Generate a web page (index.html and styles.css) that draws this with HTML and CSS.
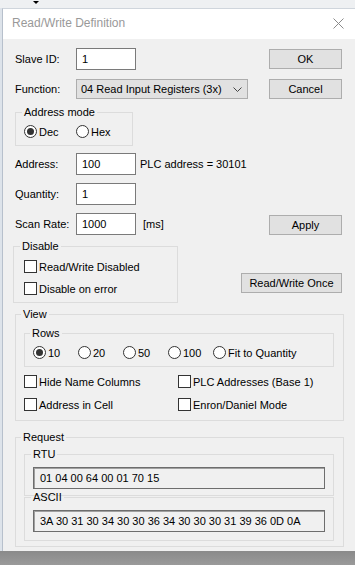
FILE: index.html
```html
<!DOCTYPE html>
<html>
<head>
<meta charset="utf-8">
<link rel="stylesheet" href="styles.css">
</head>
<body>
<div class="screen">
  <div class="strip"><span class="caret"></span></div>
  <div class="frame">
    <div class="window">
      <div class="titlebar">
        <span class="title">Read/Write Definition</span>
        <svg class="close" width="11" height="11" viewBox="0 0 11 11"><path d="M0.5 0.5 L10.5 10.5 M10.5 0.5 L0.5 10.5" stroke="#8a8a8a" stroke-width="1" fill="none"/></svg>
      </div>
      <div class="content">
        <div class="row r-slave">
          <span class="lbl">Slave ID:</span>
          <div class="field">1</div>
          <div class="btn btn-ok">OK</div>
        </div>
        <div class="row r-func">
          <span class="lbl">Function:</span>
          <div class="select">
            <span>04 Read Input Registers (3x)</span>
            <svg class="chev" width="9" height="5" viewBox="0 0 9 5"><path d="M0.5 0.5 L4.5 4.5 L8.5 0.5" stroke="#444" stroke-width="1" fill="none"/></svg>
          </div>
          <div class="btn">Cancel</div>
        </div>
        <fieldset class="group g-addrmode">
          <legend>Address mode</legend>
          <div class="gbody radios">
            <span class="opt w52"><span class="radio on"></span>Dec</span>
            <span class="opt"><span class="radio"></span>Hex</span>
          </div>
        </fieldset>
        <div class="row r-addr">
          <span class="lbl">Address:</span>
          <div class="field">100</div>
          <span class="note">PLC address = 30101</span>
        </div>
        <div class="row r-qty">
          <span class="lbl">Quantity:</span>
          <div class="field">1</div>
        </div>
        <div class="row r-scan">
          <span class="lbl">Scan Rate:</span>
          <div class="field">1000</div>
          <span class="unit">[ms]</span>
          <div class="btn btn-apply">Apply</div>
        </div>
        <div class="row r-disable">
          <fieldset class="group g-disable">
            <legend>Disable</legend>
            <div class="gbody checks">
              <span class="opt"><span class="check"></span>Read/Write Disabled</span>
              <span class="opt"><span class="check"></span>Disable on error</span>
            </div>
          </fieldset>
          <div class="btn btn-once">Read/Write Once</div>
        </div>
        <fieldset class="group g-wide g-view">
          <legend>View</legend>
          <div class="gbody view-body">
            <fieldset class="group g-inner">
              <legend>Rows</legend>
              <div class="gbody radios rows">
                <span class="opt w45"><span class="radio on"></span>10</span>
                <span class="opt w45"><span class="radio"></span>20</span>
                <span class="opt w45"><span class="radio"></span>50</span>
                <span class="opt w45"><span class="radio"></span>100</span>
                <span class="opt"><span class="radio"></span>Fit to Quantity</span>
              </div>
            </fieldset>
            <div class="view-checks">
              <span class="opt"><span class="check"></span>Hide Name Columns</span>
              <span class="opt"><span class="check"></span>PLC Addresses (Base 1)</span>
              <span class="opt"><span class="check"></span>Address in Cell</span>
              <span class="opt"><span class="check"></span>Enron/Daniel Mode</span>
            </div>
          </div>
        </fieldset>
        <fieldset class="group g-wide g-request">
          <legend>Request</legend>
          <div class="gbody req-body">
            <fieldset class="group g-inner g-rtu">
              <legend>RTU</legend>
              <div class="gbody"><div class="readout">01 04 00 64 00 01 70 15</div></div>
            </fieldset>
            <fieldset class="group g-inner g-ascii">
              <legend>ASCII</legend>
              <div class="gbody"><div class="readout">3A 30 31 30 34 30 30 36 34 30 30 30 31 39 36 0D 0A</div></div>
            </fieldset>
          </div>
        </fieldset>
      </div>
    </div>
  </div>
  <div class="shadow"></div>
</div>
</body>
</html>
```

FILE: styles.css
```css
* { box-sizing: border-box; }
html, body { margin: 0; padding: 0; }
body {
  width: 355px;
  height: 565px;
  overflow: hidden;
  background: #8f8f8f;
  font-family: "Liberation Sans", Arial, sans-serif;
  font-size: 11px;
  color: #000;
}
.screen { display: flex; flex-direction: column; height: 565px; }
.strip { height: 8px; flex: none; background: #eef0f2; display: flex; }
.caret {
  width: 0; height: 0;
  border-left: 3px solid transparent;
  border-right: 3px solid transparent;
  border-top: 3px solid #000;
  margin: 1px 0 0 33px;
}
.frame { display: flex; flex: none; background: #dde3ea; padding-left: 2px; }
.window {
  width: 353px;
  border-left: 1px solid #b7c0cc;
  border-top: 1px solid #cfd5dc;
  background: #f0f0f0;
}
.titlebar {
  height: 30px;
  background: #fff;
  display: flex;
  align-items: center;
  padding: 0 11px 2px 9px;
}
.title { font-size: 12px; color: #999; }
.close { margin-left: auto; margin-top: 1px; }
.content {
  height: 512px;
  padding: 9px 0 0 12px;
  width: 341px;
}
.shadow { flex: 1; background: linear-gradient(#8a8a8a, #9a9a9a); }

.row { display: flex; align-items: flex-start; }
.lbl { width: 61px; flex: none; height: 22px; line-height: 22px; }
.field {
  width: 60px; height: 22px; flex: none;
  border: 1px solid #7a7a7a;
  background: #fff;
  padding-left: 5px;
  line-height: 20px;
}
.btn {
  height: 20px;
  width: 73px;
  flex: none;
  border: 1px solid #adadad;
  background: #e1e1e1;
  display: flex; align-items: center; justify-content: center;
  margin-left: auto;
  margin-right: 2px;
}
.btn-ok { margin-top: 1px; }
.r-func { margin-top: 9px; }
.r-func .lbl { height: 20px; line-height: 20px; }
.select {
  width: 172px; height: 20px;
  border: 1px solid #adadad;
  background: #e1e1e1;
  display: flex; align-items: center;
  padding-left: 4px;
}
.chev { margin-left: auto; margin-right: 5px; }

.group {
  margin: 0;
  padding: 0;
  border: 1px solid #dcdcdc;
  min-width: 0;
}
.group > legend {
  padding: 0 2px;
  margin-left: 5px;
  line-height: 13px;
  font-size: 11px;
}
.g-addrmode { margin-top: 7px; width: 118px; }
.g-addrmode > legend, .g-disable > legend, .g-rtu > legend, .g-ascii > legend { margin-left: 6px; }
.g-addrmode .gbody { padding: 6px 0 7px 8px; }

.radios { display: flex; align-items: center; height: auto; }
.opt { display: flex; align-items: center; height: 13px; white-space: nowrap; }
.w52 { width: 52px; }
.w45 { width: 45px; }
.radio {
  width: 13px; height: 13px; flex: none;
  border: 1px solid #333;
  border-radius: 50%;
  background: #fff;
  margin-right: 2px;
  display: flex; align-items: center; justify-content: center;
}
.radio.on::after {
  content: "";
  width: 7px; height: 7px;
  border-radius: 50%;
  background: #333;
}
.check {
  width: 13px; height: 13px; flex: none;
  border: 1px solid #333;
  background: #fff;
  margin-right: 2px;
}

.r-addr { margin-top: 7px; }
.r-qty, .r-scan { margin-top: 8px; }
.note { line-height: 22px; margin-left: 4px; }
.unit { line-height: 22px; margin-left: 7px; }
.btn-apply { margin-top: 2px; }

.r-disable { margin-top: 5px; }
.g-disable { width: 165px; margin-left: -2px; }
.checks { display: flex; flex-direction: column; gap: 9px; padding: 7px 0 7px 10px; }
.btn-once { width: 101px; margin-top: 33px; }

.g-wide { width: 329px; }
.g-view { margin-top: 5px; }
.view-body { padding: 6px 9px 9px 8px; }
.g-inner { width: 310px; }
.rows { padding: 6px 0 7px 8px; }
.view-checks {
  display: grid;
  grid-template-columns: 154px auto;
  row-gap: 10px;
  margin-top: 8px;
}
.g-request { margin-top: 10px; }
.req-body { padding: 4px 9px 5px 8px; }
.g-rtu .gbody { padding: 6px 8px 6px 8px; }
.g-ascii { margin-top: -5px; }
.g-ascii .gbody { padding: 6px 8px 8px 8px; }
.readout {
  height: 22px;
  border: 1px solid #6d6d6d;
  box-shadow: inset 1px 1px 0 #a0a0a0;
  background: #f0f0f0;
  padding-left: 6px;
  line-height: 20px;
}
```
